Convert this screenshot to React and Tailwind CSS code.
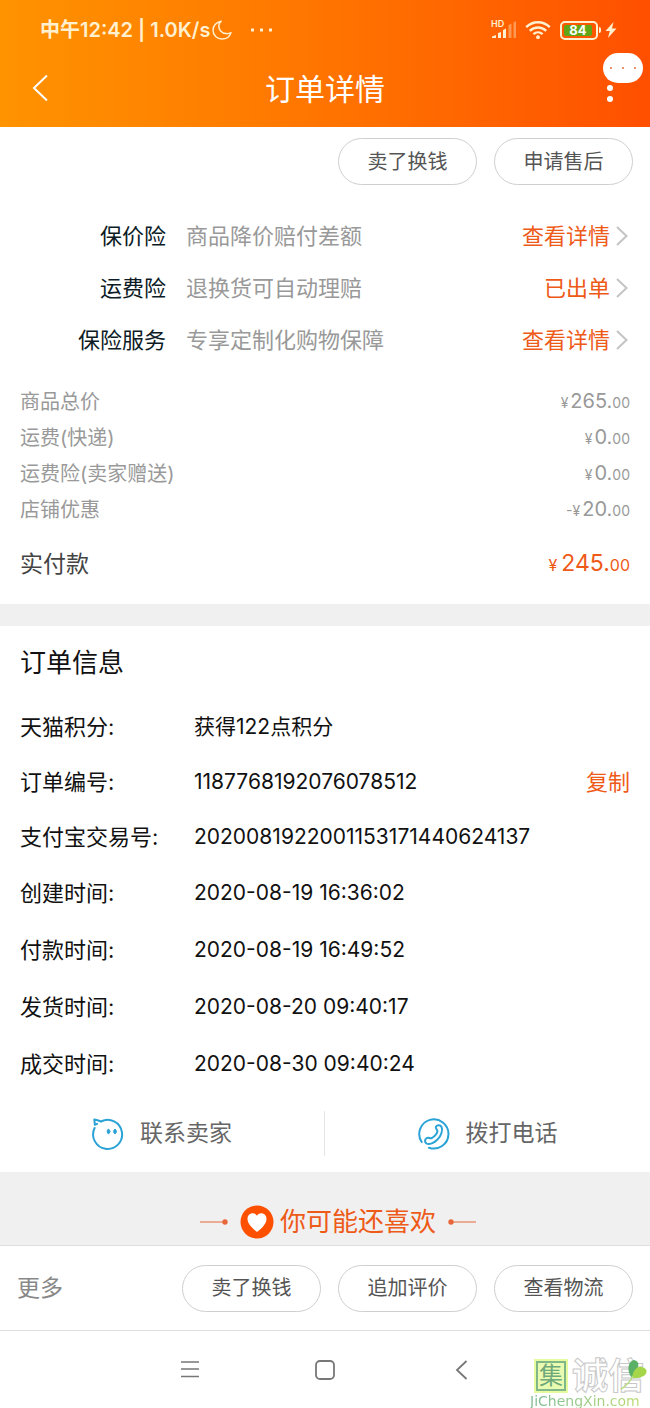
import React from 'react';

const insurances = [
  { name: '保价险', desc: '商品降价赔付差额', action: '查看详情' },
  { name: '运费险', desc: '退换货可自动理赔', action: '已出单' },
  { name: '保险服务', desc: '专享定制化购物保障', action: '查看详情' },
];

const prices = [
  { label: '商品总价', sign: '¥', amount: '265' },
  { label: '运费(快递)', sign: '¥', amount: '0' },
  { label: '运费险(卖家赠送)', sign: '¥', amount: '0' },
  { label: '店铺优惠', sign: '-¥', amount: '20' },
];

const orderNumbers = [
  { label: '天猫积分:', value: '获得122点积分' },
  { label: '订单编号:', value: '1187768192076078512', copy: true },
  { label: '支付宝交易号:', value: '2020081922001153171440624137' },
];

const orderTimes = [
  { label: '创建时间:', value: '2020-08-19 16:36:02' },
  { label: '付款时间:', value: '2020-08-19 16:49:52' },
  { label: '发货时间:', value: '2020-08-20 09:40:17' },
  { label: '成交时间:', value: '2020-08-30 09:40:24' },
];

const PillButton = ({ children }) => (
  <button
    type="button"
    className="h-[47px] w-[139px] rounded-full border border-[#cfcfcf] bg-white text-[20px] leading-[28px] text-[#555]"
  >
    {children}
  </button>
);

const StatusBar = () => (
  <div className="flex h-[60px] items-center pl-10 pr-[33px] text-[#fff0d0]">
    <span className="text-[20px] leading-[28px] font-semibold">中午12:42 | 1.0K/s</span>
    <svg className="ml-0.5 h-5 w-5" viewBox="0 0 20 20" fill="none" stroke="currentColor" strokeWidth="1.5" strokeLinejoin="round">
      <path d="M9.2 1.2C4.5 2 1 5.700 1 10.200 1 15.300 5 19 10 19c4.200 0 7.800-2.500 9-6.400-1.600.9-3.200 1.200-4.900 1C9.500 13.200 6.600 9.500 6.800 5.800c.1-1.800.9-3.400 2.400-4.600Z" />
    </svg>
    <svg className="ml-[18px] h-1 w-6" viewBox="0 0 24 4" fill="currentColor">
      <path d="M1 .5h3v3H1zM10 .5h3v3h-3zM19 .5h3v3h-3z" />
    </svg>

    <div className="ml-auto flex items-center">
      {/* Signal */}
      <div className="relative">
        <svg className="h-5 w-[26px]" viewBox="0 0 26 20" fill="currentColor">
          <path d="M1 18v-1.500l4-1.500v3zM7 18v-5l3-1v6zM12 18V10l3-1.500V18z" />
          <path d="M17.500 18V5l3-1.500V18zM22.500 18V2.500L25 1v17z" opacity=".4" />
        </svg>
        <span className="absolute -top-0.5 left-0 text-[9px] leading-[12px] font-semibold">HD</span>
      </div>
      <svg className="ml-2 h-5 w-[26px]" viewBox="0 0 26 20" fill="none" stroke="currentColor" strokeWidth="2.400">
        <path d="M1.200 7.200C8 .6 18 .6 24.800 7.200M4.800 10.800c4.800-4.500 11.600-4.500 16.400 0M8.400 14.200c2.700-2.500 6.500-2.500 9.200 0" />
        <circle cx="13" cy="17.200" r="1.900" fill="currentColor" stroke="none" />
      </svg>
      {/* Battery */}
      <div className="ml-[9px] flex h-[19px] w-[38px] items-center rounded-[5px] border-2 border-current p-0.5">
        <span className="flex h-full w-7 items-center justify-center rounded-xs bg-[#63a615] text-[13px] leading-none font-bold text-white">84</span>
      </div>
      <span className="ml-px h-1.5 w-0.5 rounded-r bg-current" />
      <svg className="ml-1 h-4 w-3" viewBox="0 0 12 16" fill="currentColor">
        <path d="M8.500 0 .5 9h4.300L3 16l8.500-9.500H7z" />
      </svg>
    </div>
  </div>
);

const Header = () => (
  <header className="h-[127px] bg-linear-to-r from-[#ff9300] to-[#ff4f00]">
    <StatusBar />
    <div className="grid grid-cols-[1fr_auto_1fr] items-center text-white">
      <button type="button" aria-label="返回" className="ml-[31px] justify-self-start">
        <svg className="h-14 w-[18px]" viewBox="0 0 18 56" fill="none" stroke="currentColor" strokeWidth="2">
          <path d="M16 14.500 3 27l13 12.500" />
        </svg>
      </button>
      <h1 className="text-[30px] leading-[58px]">订单详情</h1>
      <div className="relative mr-[33px] justify-self-end">
        <button type="button" aria-label="更多操作" className="block">
          <svg className="h-14 w-[14px]" viewBox="0 0 14 56" fill="currentColor">
            <circle cx="7" cy="16" r="3" />
            <circle cx="7" cy="27" r="3" />
            <circle cx="7" cy="38" r="3" />
          </svg>
        </button>
        {/* Unread badge */}
        <span className="absolute -top-2 left-0 flex h-[30px] w-10 items-center justify-center gap-[10px] rounded-full bg-white">
          <i className="h-0.5 w-0.5 rounded-full bg-[#e0713c]" />
          <i className="h-0.5 w-0.5 rounded-full bg-[#e0713c]" />
          <i className="h-0.5 w-0.5 rounded-full bg-[#e0713c]" />
        </span>
      </div>
    </div>
  </header>
);

const InsuranceList = () => (
  <ul className="pt-[25px]">
    {insurances.map((item) => (
      <li key={item.name} className="flex h-[52px] items-center pr-[22px] text-[22px] leading-[32px]">
        <span className="w-[166px] text-right text-[#0c1b25]">{item.name}</span>
        <span className="ml-5 text-[#999]">{item.desc}</span>
        <a href="#detail" className="ml-auto flex items-center gap-1.5 text-[#ee5a18]">
          {item.action}
          <svg className="h-5 w-3" viewBox="0 0 12 20" fill="none" stroke="#c4c4c4" strokeWidth="2">
            <path d="m1 1 9.500 9L1 19" />
          </svg>
        </a>
      </li>
    ))}
  </ul>
);

const PriceList = () => (
  <dl className="px-5 pt-[18px] pb-1">
    {prices.map((row) => (
      <div key={row.label} className="flex h-9 items-center justify-between text-[20px] leading-[28px] text-[#999]">
        <dt>{row.label}</dt>
        <dd>
          <small className="mr-0.5 text-[14px]">{row.sign}</small>
          {row.amount}.
          <small className="text-[14px]">00</small>
        </dd>
      </div>
    ))}
    <div className="flex h-[72px] items-center justify-between text-[23px] leading-[32px]">
      <dt className="text-[#444]">实付款</dt>
      <dd className="text-[#ee5a18]">
        <small className="mr-1 text-[16px]">¥</small>
        245.
        <small className="text-[16px]">00</small>
      </dd>
    </div>
  </dl>
);

const InfoRow = ({ label, value, copy }) => (
  <>
    <dt className="w-[174px] text-[22px]">{label}</dt>
    <dd className="flex flex-1 items-center justify-between text-[21px]">
      {value}
      {copy && (
        <button type="button" className="text-[22px] text-[#ee5a18]">复制</button>
      )}
    </dd>
  </>
);

const OrderInfo = () => (
  <section className="px-5 pt-[18px] text-[#111]">
    <h2 className="text-[26px] leading-[38px]">订单信息</h2>
    <dl className="pt-[17px] leading-[32px]">
      {orderNumbers.map((row) => (
        <div key={row.label} className="flex h-[55px] items-center">
          <InfoRow {...row} />
        </div>
      ))}
      {orderTimes.map((row) => (
        <div key={row.label} className="flex h-[57px] items-center">
          <InfoRow {...row} />
        </div>
      ))}
    </dl>
  </section>
);

const ContactBar = () => (
  <div className="grid grid-cols-2 pt-[19px] pb-4 text-[23px] leading-[45px] text-[#666]">
    <button type="button" className="flex items-center justify-center gap-4 border-r border-[#e5e5e5]">
      <svg className="h-8 w-8" viewBox="0 0 32 32" fill="none" stroke="#2ba3d6" strokeWidth="2" strokeLinecap="round" strokeLinejoin="round">
        <path d="M2.600 10A14.500 14.500 0 1 0 9 3.500Q5.500 1.800 2.300 1.400L2.900 6.800 5 5.800" />
        <ellipse cx="16.500" cy="13.500" rx="1.300" ry="2.200" fill="#2ba3d6" strokeWidth="1" />
        <ellipse cx="23" cy="13.500" rx="1.300" ry="2.200" fill="#2ba3d6" strokeWidth="1" />
      </svg>
      联系卖家
    </button>
    <button type="button" className="flex items-center justify-center gap-4">
      <svg className="h-8 w-8" viewBox="0 0 32 32" fill="none" stroke="#2ba3d6" strokeWidth="2" strokeLinecap="round" strokeLinejoin="round">
        <path d="M3.700 24A14.600 14.600 0 1 1 11 29.700" />
        <path d="M18 8.500c1.500-2 4.400-1.600 5.500.3 1.600 3-.3 9.200-4 12.700-3.500 3.500-8.300 5.600-11 4-2-1.300-2-4.300.2-5.400 1.800-.9 3.200.7 4.800.1 2.500-1 5.400-4.200 5.900-6.700.4-1.800-2.600-2.900-1.400-5Z" />
      </svg>
      拨打电话
    </button>
  </div>
);

const RecommendTitle = () => (
  <section className="flex h-[73px] items-center justify-center bg-[#f0f0f0] pt-[26px] pl-[26px] text-[#ee5a18]">
    <svg className="h-1.5 w-7" viewBox="0 0 28 6" fill="#e8663a">
      <path d="M0 2.500h24v1H0z" />
      <circle cx="25" cy="3" r="2.700" />
    </svg>
    <svg className="ml-3 h-[34px] w-[34px]" viewBox="0 0 34 34">
      <circle cx="17" cy="17" r="16.500" fill="#ff5000" />
      <path d="M17 27C12 23 7.500 18.500 7.500 13.900c0-5.700 6.700-7.600 9.500-3.200 2.800-4.400 9.500-2.500 9.500 3.200C26.500 18.500 22 23 17 27Z" fill="#fff" />
    </svg>
    <h2 className="ml-1.5 text-[26px] leading-[38px]">你可能还喜欢</h2>
    <svg className="ml-3 h-1.5 w-7" viewBox="0 0 28 6" fill="#e8663a">
      <path d="M4 2.500h24v1H4z" />
      <circle cx="3" cy="3" r="2.700" />
    </svg>
  </section>
);

const ActionBar = () => (
  <div className="flex h-[86px] items-center gap-[17px] border-y border-[#dedede] px-[17px]">
    <button type="button" className="mr-auto text-[23px] leading-[32px] text-[#888]">更多</button>
    <PillButton>卖了换钱</PillButton>
    <PillButton>追加评价</PillButton>
    <PillButton>查看物流</PillButton>
  </div>
);

const Watermark = () => (
  <div className="absolute right-0 bottom-0 w-[120px]">
    <div className="flex items-center pl-1.5">
      <span className="h-[30px] w-[30px] border-2 border-[#7fb789] bg-[#e9fbb0] text-center text-[24px] leading-[26px] text-[#6fa87a] outline-2 outline-[#e6fa9e]">集</span>
      <span className="ml-1.5 text-[36px] leading-[36px] font-bold whitespace-nowrap text-white [-webkit-text-stroke:1px_#c8c8c8]">诚信</span>
    </div>
    {/* Heart-shaped leaf */}
    <svg className="absolute top-0 right-0 h-8 w-8" viewBox="0 0 32 32">
      <path d="M14 20C8 13 10 3 16 2c4 1 5 4 4 7Z" fill="#5bb068" />
      <path d="M14 20C15 12 19 8 24 9c8 2 6 12-10 11Z" fill="#a5d64a" />
      <path d="M15 18Q11 26 3 31" fill="none" stroke="#b7dc80" strokeWidth="1.500" />
    </svg>
    <p className="bg-linear-to-r from-[#7dbb94] to-[#c0de6c] bg-clip-text font-['DejaVu_Sans',sans-serif] text-[14px] leading-[14px] text-transparent">
      JiChengXin.com
    </p>
  </div>
);

const SystemNav = () => (
  <nav className="relative flex h-[77px] items-center justify-center gap-[116px] text-[#777]">
    <button type="button" aria-label="菜单">
      <svg className="h-5 w-5" viewBox="0 0 20 20" stroke="currentColor" strokeWidth="1.600">
        <path d="M2 2h18M2 9h18M2 16.500h18" />
      </svg>
    </button>
    <button type="button" aria-label="主页">
      <svg className="h-5 w-5" viewBox="0 0 20 20" fill="none" stroke="currentColor" strokeWidth="1.800">
        <rect x="1" y="1" width="18" height="18" rx="4" />
      </svg>
    </button>
    <button type="button" aria-label="返回">
      <svg className="h-5 w-5" viewBox="0 0 20 20" fill="none" stroke="currentColor" strokeWidth="1.800">
        <path d="M15.500 1 6 10l9.500 9" />
      </svg>
    </button>
    <Watermark />
  </nav>
);

const App = () => {
  return (
    <div className="bg-white font-[Inter,'Noto_Sans_CJK_SC',sans-serif]">
      <Header />
      <main>
        <div className="flex justify-end gap-[17px] pt-[11px] pr-[17px]">
          <PillButton>卖了换钱</PillButton>
          <PillButton>申请售后</PillButton>
        </div>
        <InsuranceList />
        <PriceList />
        <div className="h-[22px] bg-[#f0f0f0]" />
        <OrderInfo />
        <ContactBar />
        <RecommendTitle />
      </main>
      <ActionBar />
      <SystemNav />
    </div>
  );
};

export default App;
